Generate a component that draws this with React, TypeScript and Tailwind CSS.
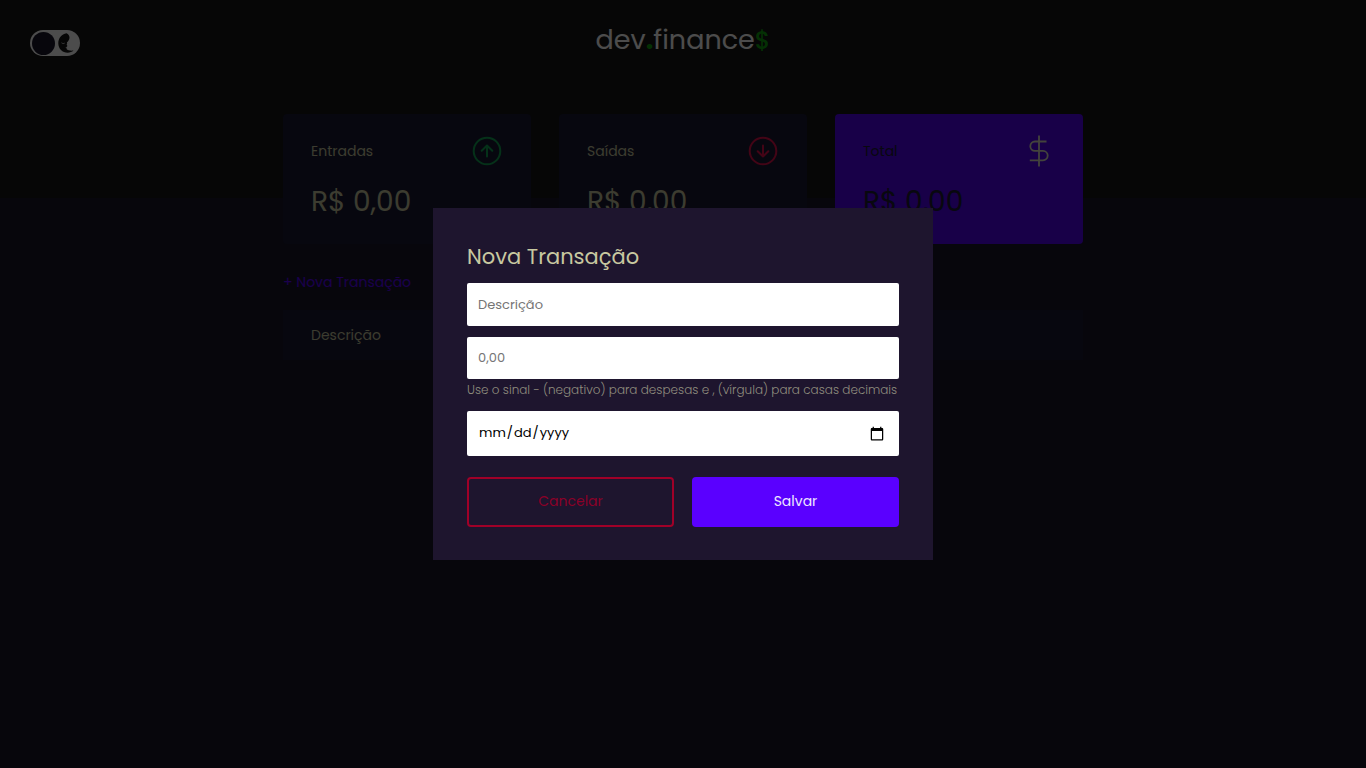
import React from "react";

const font = "font-['Poppins','Inter','Noto_Sans',sans-serif]";

function ArrowCircle({ down = false, className }: { down?: boolean; className: string }) {
  return (
    <svg viewBox="0 0 32 32" className={`size-8 ${className}`} fill="none" stroke="currentColor" strokeWidth="2" strokeLinecap="round" strokeLinejoin="round" aria-hidden="true">
      <circle cx="16" cy="16" r="13.3" />
      {down ? <path d="M16 10.500v11M10.700 16.200l5.300 5.300 5.300-5.300" /> : <path d="M16 21.500v-11M10.700 15.800l5.300-5.300 5.300 5.300" />}
    </svg>
  );
}

function DollarIcon() {
  return (
    <svg viewBox="0 0 32 32" className="size-8 text-[#e1e1c8]" fill="none" stroke="currentColor" strokeWidth="1.8" aria-hidden="true">
      <path d="M16 .5v31M23.500 6.500H12a4.700 4.700 0 0 0 0 9.400h8a4.700 4.700 0 0 1 0 9.400H6.800" />
    </svg>
  );
}

function Card({ title, icon, total = false }: { title: string; icon: React.ReactNode; total?: boolean }) {
  return (
    <section className={`rounded px-7 py-[21px] ${total ? "bg-[#5000f0] text-[#1b1b32]" : "bg-[#191933] text-[#c8c8a0]"}`}>
      <h3 className="flex items-center justify-between text-sm leading-8">
        <span>{title}</span>
        {icon}
      </h3>
      <p className="mt-[14px] text-[28px] leading-[42px]">R$ 0,00</p>
    </section>
  );
}

export default function App() {
  return (
    <div className={`min-h-screen bg-[#18162a] ${font}`}>
      <header className="h-[198px] bg-[#141414] px-[30px] pt-5">
        <div className="grid grid-cols-[1fr_auto_1fr] items-start">
          <label className="mt-[10px] flex h-[26px] w-[50px] items-center justify-between rounded-full bg-white px-[2px]">
            <input type="checkbox" aria-label="Modo escuro" className="size-[23px] appearance-none rounded-full bg-[#18162a]" />
            <svg viewBox="0 0 16 20" className="mr-1 h-5 w-4" aria-hidden="true">
              <path fill="#141414" d="M8.500.3C3.500 1.300.3 5.200.3 10.200c0 5.400 4.200 9.500 9.300 9.500 2.300 0 4.400-.8 5.900-2.100-3.200.3-5.800-.2-7-1.600l.2-1.300-1.500-.4 1.800-.6.4-1-.9-.9.700-.7-.3-1.500C10.300 8.500 11.500 6.400 11.500 4.500 11.500 2.800 10.300 1.200 8.500.3Z" />
              <path fill="none" stroke="#fff" strokeWidth=".7" d="M3.500 9.800c1 .9 2.300 1 3.200.3" />
            </svg>
          </label>
          <h1 className="text-[27px] leading-10 text-white">
            dev<span className="font-bold text-[#10a010]">.</span>finance<span className="text-2xl font-medium text-[#10a010]">$</span>
          </h1>
        </div>
      </header>

      <main className="mx-auto -mt-[84px] w-[90vw] max-w-[800px]">
        <div className="grid grid-cols-3 gap-7">
          <Card title="Entradas" icon={<ArrowCircle className="text-[#12a454]" />} />
          <Card title="Saídas" icon={<ArrowCircle down className="text-[#e0104a]" />} />
          <Card title="Total" total icon={<DollarIcon />} />
        </div>
        <a href="#nova" className="mt-7 inline-block text-sm leading-5 text-[#5a00ff]">+ Nova Transação</a>
        <table className="mt-4 w-full bg-[#191933] text-sm leading-5 text-[#c8c8a0]">
          <thead>
            <tr>
              <th className="rounded px-7 py-[15px] text-left font-normal">Descrição</th>
            </tr>
          </thead>
        </table>
      </main>

      <div className="fixed inset-0 flex items-center justify-center bg-black/70">
        <div role="dialog" aria-labelledby="modal-title" className="w-[90%] max-w-[500px] bg-[#1e152e] px-[34px] py-[33px]">
          <h2 id="modal-title" className="text-[21px] leading-8 text-[#c8c8a0]">Nova Transação</h2>
          <form className="text-sm">
            <input aria-label="Descrição" placeholder="Descrição" className="mt-[10px] block h-[43px] w-full rounded-xs bg-white px-[11px] text-[13px] placeholder:text-[#757575]" />
            <input aria-label="Valor" placeholder="0,00" className="mt-[11px] block h-[42px] w-full rounded-xs bg-white px-[11px] text-[13px] placeholder:text-[#757575]" />
            <small className="block text-xs leading-[22px] font-light text-[#908d7e]">Use o sinal - (negativo) para despesas e , (vírgula) para casas decimais</small>
            <input type="date" aria-label="Data" className="mt-[10px] block h-[45px] w-full rounded-xs bg-white px-[11px] text-[13px] text-black [&::-webkit-calendar-picker-indicator]:mr-[3px] [&::-webkit-calendar-picker-indicator]:size-4 [&::-webkit-calendar-picker-indicator]:p-0" />
            <div className="mt-[21px] grid grid-cols-2 gap-[18px]">
              <button type="button" className="h-[50px] rounded border-2 border-[#a00028] pb-[2px] text-[#8c0028]">Cancelar</button>
              <button type="submit" className="h-[50px] rounded bg-[#5a00ff] pb-[2px] text-[#eee6ff]">Salvar</button>
            </div>
          </form>
        </div>
      </div>
    </div>
  );
}
